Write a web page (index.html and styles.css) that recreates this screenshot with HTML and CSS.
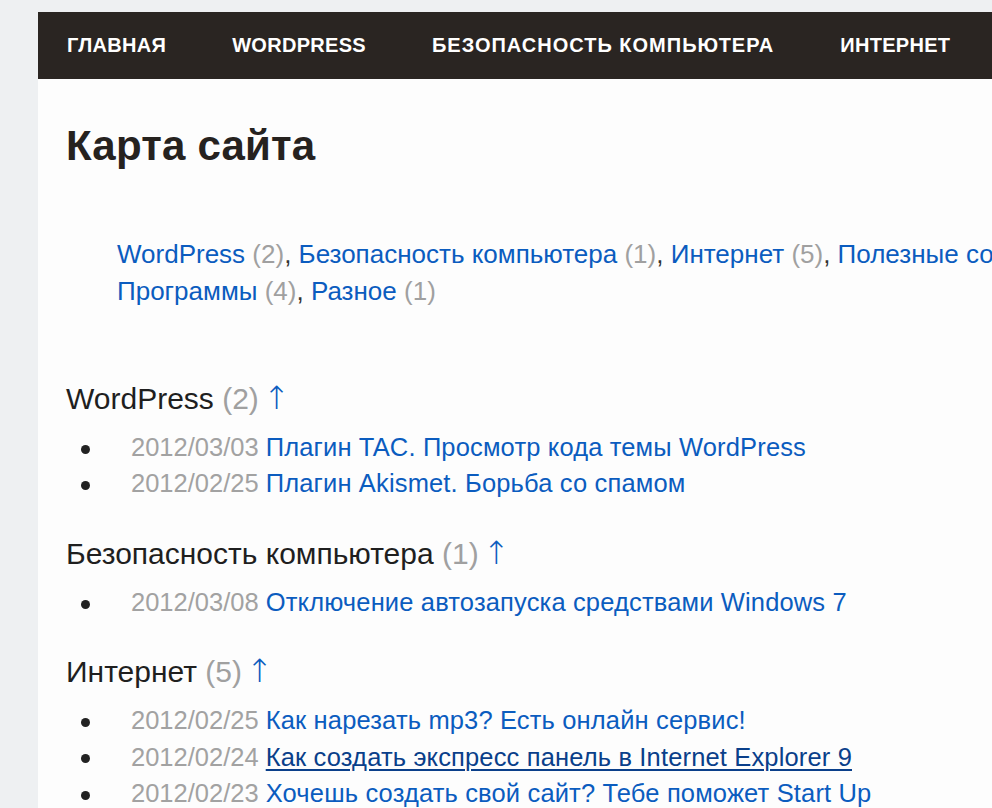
FILE: index.html
```html
<!DOCTYPE html>
<html lang="ru">
<head>
<meta charset="utf-8">
<title>Карта сайта</title>
<link rel="stylesheet" href="styles.css">
</head>
<body>
<div class="page">
  <nav class="topnav">
    <a href="#">ГЛАВНАЯ</a>
    <a href="#">WORDPRESS</a>
    <a href="#" class="wide">БЕЗОПАСНОСТЬ КОМПЬЮТЕРА</a>
    <a href="#">ИНТЕРНЕТ</a>
  </nav>
  <main class="content">
    <h1 class="title">Карта сайта</h1>
    <p class="cats"><a href="#">WordPress</a> <span class="cnt">(2)</span>, <a href="#">Безопасность компьютера</a> <span class="cnt">(1)</span>, <a href="#">Интернет</a> <span class="cnt">(5)</span>, <a href="#">Полезные советы</a> <span class="cnt">(3)</span>,<br><a href="#">Программы</a> <span class="cnt">(4)</span>, <a href="#">Разное</a> <span class="cnt">(1)</span></p>

    <section class="sec">
      <h2 class="sec-title">WordPress <span class="cnt">(2)</span> <a href="#" class="up">↑</a></h2>
      <ul class="posts">
        <li><span class="date">2012/03/03</span> <a href="#">Плагин TAC. Просмотр кода темы WordPress</a></li>
        <li><span class="date">2012/02/25</span> <a href="#">Плагин Akismet. Борьба со спамом</a></li>
      </ul>
    </section>

    <section class="sec">
      <h2 class="sec-title">Безопасность компьютера <span class="cnt">(1)</span> <a href="#" class="up">↑</a></h2>
      <ul class="posts">
        <li><span class="date">2012/03/08</span> <a href="#">Отключение автозапуска средствами Windows 7</a></li>
      </ul>
    </section>

    <section class="sec">
      <h2 class="sec-title">Интернет <span class="cnt">(5)</span> <a href="#" class="up">↑</a></h2>
      <ul class="posts">
        <li><span class="date">2012/02/25</span> <a href="#">Как нарезать mp3? Есть онлайн сервис!</a></li>
        <li><span class="date">2012/02/24</span> <a href="#" class="hover">Как создать экспресс панель в Internet Explorer 9</a></li>
        <li><span class="date">2012/02/23</span> <a href="#">Хочешь создать свой сайт? Тебе поможет Start Up</a></li>
        <li><span class="date">2012/02/20</span> <a href="#">Как быстро найти нужную информацию</a></li>
      </ul>
    </section>
  </main>
</div>
</body>
</html>
```

FILE: styles.css
```css
html, body {
  margin: 0;
  padding: 0;
}
body {
  background: #eef0f2;
  overflow: hidden;
  font-family: "Liberation Sans", Arial, sans-serif;
}
.page {
  margin: 12px 0 0 38px;
  width: 1300px;
  background: #fdfdfd;
  min-height: 900px;
}
.topnav {
  background: #2a2522;
  height: 67px;
  display: flex;
  align-items: center;
  gap: 66px;
  padding-left: 29px;
  white-space: nowrap;
}
.topnav a {
  color: #fff;
  text-decoration: none;
  font-weight: bold;
  font-size: 20px;
  letter-spacing: 0.3px;
}
.topnav a.wide {
  letter-spacing: 1px;
}
.content {
  padding: 0 0 0 28px;
}
.title {
  margin: 43px 0 0 0;
  font-size: 42px;
  line-height: 48px;
  font-weight: bold;
  letter-spacing: 0.2px;
  color: #26221f;
}
.cats {
  margin: 66px 0 0 0;
  padding-left: 51px;
  font-size: 26px;
  line-height: 37px;
  color: #333;
  white-space: nowrap;
}
a {
  color: #0b5cbf;
  text-decoration: none;
}
.cnt {
  color: #a0a0a0;
}
.cats + .sec {
  margin-top: 71px;
}
.sec-title {
  margin: 0 0 12px 0;
  font-size: 30px;
  line-height: 36px;
  font-weight: normal;
  color: #1f1f1f;
}
.up {
  color: #0b5cbf;
  font-family: "DejaVu Sans", sans-serif;
  font-weight: 200;
  font-size: 32px;
  line-height: 1;
  margin-left: -4px;
}
.posts {
  list-style: none;
  margin: 0 0 34px 0;
  padding: 0 0 0 15px;
}
.posts li {
  font-size: 25.5px;
  line-height: 36.4px;
  white-space: nowrap;
}
.posts li::before {
  content: "";
  display: inline-block;
  width: 9px;
  height: 9px;
  border-radius: 50%;
  background: #222;
  margin-right: 41px;
  vertical-align: middle;
}
.posts a {
  letter-spacing: 0.15px;
}
.date {
  color: #a2a2a2;
}
.hover {
  color: #0a3f8a;
  text-decoration: underline;
  text-decoration-thickness: 2px;
  text-underline-offset: 3px;
}
```
